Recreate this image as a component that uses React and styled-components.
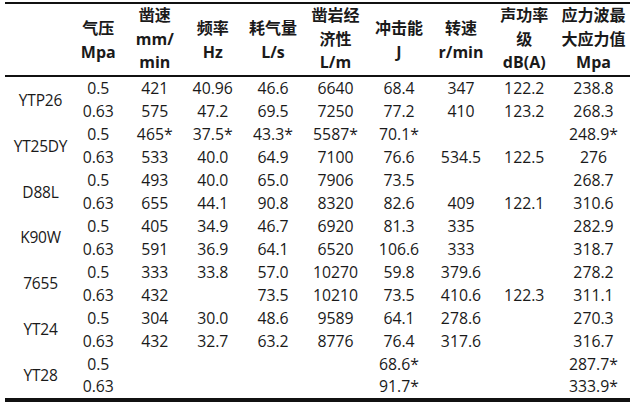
import { Fragment } from "react";
import styled, { createGlobalStyle } from "styled-components";

const GlobalStyle = createGlobalStyle`
  html, body {
    margin: 0;
    padding: 0;
    background: #ffffff;
  }
`;

const COLS = "65px 56.5px 56.5px 59.5px 61px 64px 63px 61px 65.5px 73px";

const Page = styled.div`
  padding: 2px 2px 0 5px;
  font-family: "Open Sans", "Noto Sans CJK SC", sans-serif;
  color: #1a1a1a;
`;

const Tabela = styled.div`
  width: 625px;
  border-top: 2px solid #111;
  border-bottom: 4px solid #111;
`;

const Cabecalho = styled.div`
  display: grid;
  grid-template-columns: ${COLS};
  height: 71px;
  border-bottom: 2px solid #111;
`;

const CelulaCab = styled.div`
  display: flex;
  align-items: center;
  justify-content: center;
  text-align: center;
  font-family: "Open Sans", "Noto Sans CJK SC", sans-serif;
  font-weight: 700;
  font-size: 16px;
  line-height: 23.5px;
  padding-top: ${(p) => (p.$baixo ? "2px" : "0")};
`;

const Corpo = styled.div`
  display: grid;
  grid-template-columns: ${COLS};
  grid-auto-rows: 22.93px;
`;

const Modelo = styled.div`
  grid-row: span 2;
  display: flex;
  align-items: center;
  justify-content: center;
  padding-left: 6px;
  font-size: 15.5px;
  letter-spacing: -0.2px;
  white-space: nowrap;
`;

const Celula = styled.div`
  display: flex;
  align-items: center;
  justify-content: center;
  font-size: 15.8px;
  white-space: nowrap;
`;

const cabecalhos = [
  [""],
  ["气压", "Mpa"],
  ["凿速", "mm/", "min"],
  ["频率", "Hz"],
  ["耗气量", "L/s"],
  ["凿岩经", "济性", "L/m"],
  ["冲击能", "J"],
  ["转速", "r/min"],
  ["声功率", "级", "dB(A)"],
  ["应力波最", "大应力值", "Mpa"],
];

const dados = [
  ["YTP26", [
    ["0.5", "421", "40.96", "46.6", "6640", "68.4", "347", "122.2", "238.8"],
    ["0.63", "575", "47.2", "69.5", "7250", "77.2", "410", "123.2", "268.3"],
  ]],
  ["YT25DY", [
    ["0.5", "465*", "37.5*", "43.3*", "5587*", "70.1*", "", "", "248.9*"],
    ["0.63", "533", "40.0", "64.9", "7100", "76.6", "534.5", "122.5", "276"],
  ]],
  ["D88L", [
    ["0.5", "493", "40.0", "65.0", "7906", "73.5", "", "", "268.7"],
    ["0.63", "655", "44.1", "90.8", "8320", "82.6", "409", "122.1", "310.6"],
  ]],
  ["K90W", [
    ["0.5", "405", "34.9", "46.7", "6920", "81.3", "335", "", "282.9"],
    ["0.63", "591", "36.9", "64.1", "6520", "106.6", "333", "", "318.7"],
  ]],
  ["7655", [
    ["0.5", "333", "33.8", "57.0", "10270", "59.8", "379.6", "", "278.2"],
    ["0.63", "432", "", "73.5", "10210", "73.5", "410.6", "122.3", "311.1"],
  ]],
  ["YT24", [
    ["0.5", "304", "30.0", "48.6", "9589", "64.1", "278.6", "", "270.3"],
    ["0.63", "432", "32.7", "63.2", "8776", "76.4", "317.6", "", "316.7"],
  ]],
  ["YT28", [
    ["0.5", "", "", "", "", "68.6*", "", "", "287.7*"],
    ["0.63", "", "", "", "", "91.7*", "", "", "333.9*"],
  ]],
];

export default function App() {
  return (
    <>
      <GlobalStyle />
      <Page>
        <Tabela>
          <Cabecalho>
            {cabecalhos.map((linhas, i) => (
              <CelulaCab key={i} $baixo={linhas.length === 2}>
                <div>
                  {linhas.map((l, j) => (
                    <div key={j}>{l}</div>
                  ))}
                </div>
              </CelulaCab>
            ))}
          </Cabecalho>
          <Corpo>
            {dados.map(([nome, linhas]) => (
              <Fragment key={nome}>
                <Modelo>{nome}</Modelo>
                {linhas[0].map((v, j) => (
                  <Celula key={"a" + j}>{v}</Celula>
                ))}
                {linhas[1].map((v, j) => (
                  <Celula key={"b" + j}>{v}</Celula>
                ))}
              </Fragment>
            ))}
          </Corpo>
        </Tabela>
      </Page>
    </>
  );
}
